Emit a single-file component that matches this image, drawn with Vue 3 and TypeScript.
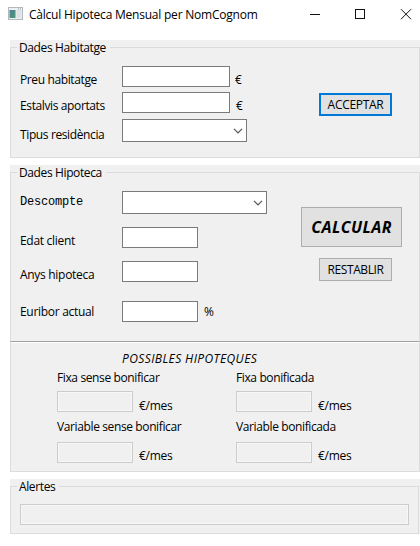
<script setup lang="ts">
import { ref } from 'vue'

interface Field {
  id: string
  label: string
  unit?: string
  kind: 'text' | 'combo'
}

const homeFields: Field[] = [
  { id: 'preu', label: 'Preu habitatge', unit: '€', kind: 'text' },
  { id: 'estalvis', label: 'Estalvis aportats', unit: '€', kind: 'text' },
  { id: 'tipus', label: 'Tipus residència', kind: 'combo' },
]

const loanFields: Field[] = [
  { id: 'descompte', label: 'Descompte', kind: 'combo' },
  { id: 'edat', label: 'Edat client', kind: 'text' },
  { id: 'anys', label: 'Anys hipoteca', kind: 'text' },
  { id: 'euribor', label: 'Euribor actual', unit: '%', kind: 'text' },
]

const results = [
  { id: 'fixa', label: 'Fixa sense bonificar' },
  { id: 'fixa-bonificada', label: 'Fixa bonificada' },
  { id: 'variable', label: 'Variable sense bonificar' },
  { id: 'variable-bonificada', label: 'Variable bonificada' },
]

const values = ref<Record<string, string>>({})
</script>

<template>
  <main class="window">
    <header class="titlebar">
      <svg class="app-icon" width="16" height="14" viewBox="0 0 16 14">
        <defs>
          <linearGradient id="pane" x1="0" y1="0" x2="1" y2="1">
            <stop offset="0" stop-color="#4c7f95" />
            <stop offset="1" stop-color="#4f9a78" />
          </linearGradient>
        </defs>
        <rect x="0.5" y="0.5" width="14" height="12" fill="#eef0f1" stroke="#b4b8bb" />
        <rect x="1.5" y="3" width="6" height="8" fill="url(#pane)" />
        <rect x="8.5" y="3" width="5" height="8" fill="#dfe3e5" />
        <path d="M10 2h1M12 2h1" stroke="#7c9aa5" />
      </svg>
      <h1 class="title">Càlcul Hipoteca Mensual per NomCognom</h1>
      <svg class="controls" width="102" height="12" viewBox="0 0 102 12" fill="none" stroke="#111">
        <path d="M0 5.500h10" />
        <rect x="45.500" y="0.500" width="9" height="9" />
        <path d="M91 0.200l10 10M101 0.200l-10 10" />
      </svg>
    </header>

    <section class="panel home">
      <div class="group">
        <h2 class="legend">Dades Habitatge</h2>
        <div class="form">
          <div v-for="f in homeFields" :key="f.id" class="row" :class="f.id">
            <label class="label" :for="f.id">{{ f.label }}</label>
            <div v-if="f.kind === 'combo'" :id="f.id" class="combo">
              <svg width="10" height="6" viewBox="0 0 10 6"><path d="M1 0.800l4 4 4-4" fill="none" stroke="#555" stroke-width="1.200" /></svg>
            </div>
            <input v-else :id="f.id" v-model="values[f.id]" class="field" />
            <span v-if="f.unit" class="unit">{{ f.unit }}</span>
          </div>
        </div>
        <div class="actions">
          <button class="button default">ACCEPTAR</button>
        </div>
      </div>
    </section>

    <section class="panel loan">
      <div class="group">
        <h2 class="legend">Dades Hipoteca</h2>
        <div class="form">
          <div v-for="f in loanFields" :key="f.id" class="row" :class="f.id">
            <label class="label" :for="f.id">{{ f.label }}</label>
            <div v-if="f.kind === 'combo'" :id="f.id" class="combo">
              <svg width="10" height="6" viewBox="0 0 10 6"><path d="M1 0.800l4 4 4-4" fill="none" stroke="#555" stroke-width="1.200" /></svg>
            </div>
            <input v-else :id="f.id" v-model="values[f.id]" class="field" />
            <span v-if="f.unit" class="unit">{{ f.unit }}</span>
          </div>
        </div>
        <div class="actions">
          <button class="button primary">CALCULAR</button>
          <button class="button">RESTABLIR</button>
        </div>
      </div>
      <div class="results">
        <h3 class="subtitle">POSSIBLES HIPOTEQUES</h3>
        <div class="result-grid">
          <div v-for="r in results" :key="r.id" class="result">
            <label class="result-label" :for="r.id">{{ r.label }}</label>
            <div class="result-line">
              <input :id="r.id" class="output" disabled />
              <span class="per-month">€/mes</span>
            </div>
          </div>
        </div>
      </div>
    </section>

    <section class="panel alerts">
      <div class="group">
        <h2 class="legend">Alertes</h2>
        <input class="output wide" disabled aria-label="Alertes" />
      </div>
    </section>
  </main>
</template>

<style>
body {
  background: #fff;
  overflow: hidden;
}
</style>

<style scoped>
.window {
  box-sizing: border-box;
  width: 420px;
  height: 546px;
  overflow: hidden;
  background: #fff;
  color: #000;
  font: 12px/16px "Open Sans", "Noto Sans", sans-serif;
  letter-spacing: -0.38px;
  white-space: nowrap;
}
h1, h2, h3 {
  margin: 0;
  font: inherit;
}
input, button {
  box-sizing: border-box;
  margin: 0;
  padding: 0;
  border-radius: 0;
  font: inherit;
  letter-spacing: inherit;
  color: inherit;
}
.titlebar {
  display: flex;
  box-sizing: border-box;
  height: 40px;
  padding: 7px 0 0 8px;
}
.app-icon {
  margin-right: 5px;
}
.title {
  width: 281px;
  letter-spacing: -0.22px;
}
.controls {
  margin-top: 2px;
}
.panel {
  box-sizing: border-box;
  width: 410px;
  margin-left: 10px;
  padding-top: 7px;
  background: #f0f0f0;
}
.home {
  height: 118px;
  margin-bottom: 7px;
}
.loan {
  height: 307px;
  margin-bottom: 7px;
}
.alerts {
  height: 55px;
}
.group {
  display: grid;
  grid-template-columns: 281px 1fr;
  grid-template-rows: 8px 1fr;
  box-sizing: border-box;
  border: 1px solid #dcdcdc;
  padding-left: 9px;
}
.home .group {
  height: 111px;
}
.loan .group {
  height: 169px;
  border-bottom: 0;
}
.alerts .group {
  width: 409px;
  height: 48px;
}
.legend {
  grid-column: 1 / -1;
  justify-self: start;
  height: 16px;
  margin: -8px 0 0 -3px;
  padding: 0 4px 0 2px;
  background: #f0f0f0;
}
.form {
  padding-top: 10px;
}
.row {
  display: flex;
  align-items: flex-start;
  height: 26px;
}
.row.estalvis {
  height: 27px;
}
.row.descompte {
  height: 36px;
}
.row.edat {
  height: 34px;
}
.row.anys {
  height: 40px;
}
.label {
  width: 102px;
  padding-top: 6px;
}
.tipus .label {
  padding-top: 8px;
}
.descompte .label {
  padding-top: 3px;
  font-family: "Liberation Mono", monospace;
  letter-spacing: -0.2px;
}
.edat .label,
.anys .label {
  letter-spacing: -0.3px;
}
.euribor .label {
  padding-top: 3px;
  letter-spacing: -0.3px;
}
.field {
  width: 76px;
  height: 21px;
  border: 1px solid #7a7a7a;
  background: #fff;
}
.home .field {
  width: 108px;
}
.combo {
  display: flex;
  align-items: center;
  justify-content: flex-end;
  box-sizing: border-box;
  width: 125px;
  height: 23px;
  padding-right: 3px;
  border: 1px solid #7a7a7a;
  background: #fff;
}
.descompte .combo {
  width: 145px;
}
.unit {
  padding: 6px 0 0 6px;
}
.preu .unit {
  padding-left: 5px;
}
.euribor .unit {
  padding-top: 3px;
}
.actions {
  display: flex;
  flex-direction: column;
  align-items: flex-end;
  width: 101px;
}
.home .actions {
  padding-top: 37px;
}
.loan .actions {
  padding-top: 26px;
}
.button {
  width: 73px;
  height: 23px;
  border: 1px solid #adadad;
  background: #e1e1e1;
}
.button.default {
  border: 2px solid #0078d7;
  letter-spacing: -0.3px;
}
.button.primary {
  width: 101px;
  height: 40px;
  margin-bottom: 11px;
  font-size: 16px;
  font-style: italic;
  font-weight: 700;
  letter-spacing: 0.45px;
}
.loan .button:last-child {
  margin-right: 10px;
}
.home .button {
  margin-right: 10px;
}
.results {
  box-sizing: border-box;
  height: 131px;
  padding: 9px 0 0 46px;
  border: 1px solid #dcdcdc;
  border-top-color: #a0a0a0;
  box-shadow: inset 0 1px #fff;
}
.subtitle {
  margin-left: 65px;
  font-style: italic;
  letter-spacing: 0.4px;
}
.result-grid {
  display: grid;
  grid-template-columns: 179px 1fr;
  grid-template-rows: 49px 50px;
  padding-top: 3px;
}
.result {
  display: flex;
  flex-direction: column;
  gap: 5px;
}
.result:nth-child(n + 3) {
  gap: 7px;
}
.result-line {
  display: flex;
  align-items: flex-start;
  gap: 6px;
}
.output {
  width: 76px;
  height: 21px;
  border: 1px solid #cccccc;
  background: #f0f0f0;
  box-shadow: inset 0 0 0 1px #f7f7f7;
}
.per-month {
  padding-top: 7px;
  letter-spacing: -0.3px;
}
.result:nth-child(n + 3) .per-month {
  padding-top: 6px;
}
.output.wide {
  grid-column: 1 / -1;
  width: 389px;
  margin-top: 9px;
}
</style>
